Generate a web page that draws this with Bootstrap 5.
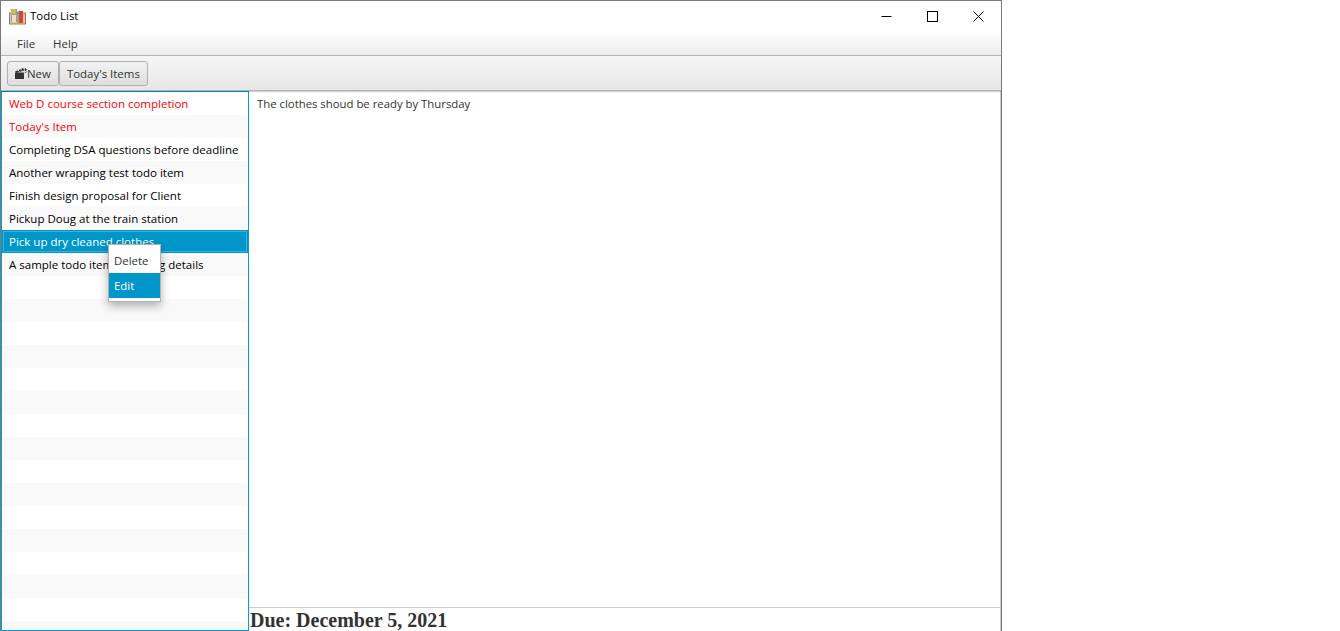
<!DOCTYPE html>
<html lang="en">
<head>
<meta charset="utf-8">
<title>Todo List</title>
<link href="https://cdn.jsdelivr.net/npm/bootstrap@5.3.0/dist/css/bootstrap.min.css" rel="stylesheet">
<style>
html,body{height:631px;overflow:hidden;background:#fff}
body{font-family:"Open Sans","Noto Sans",sans-serif;font-size:11.45px;color:#333;line-height:16px}
.appwin{width:1002px;height:631px;border:1px solid #7a7a7a;border-bottom:0}
.titlebar{height:30px;flex:none;color:#000}
.titlebar .ttl{margin-left:4px}
.tlogo{margin-left:8px}
.winbtn{width:46px;height:30px}
.menubar{height:25px;flex:none;background:linear-gradient(#fff,#ececec);border-bottom:1px solid #b5b5b5;padding-left:7px}
.menuitem{padding:2px 9px 0;color:#333;line-height:24px}
.toolbar{height:35px;flex:none;background:linear-gradient(#f6f6f6,#e6e6e6);border-bottom:1px solid #b4b4b4;box-shadow:0 1px 1px rgba(0,0,0,.18);padding:5px 0 0 6px;z-index:2}
.fxbtn{height:25px;padding:0 7px;font-size:11.45px;line-height:23px;color:#333;background:linear-gradient(#f2f2f2,#dedede);border:1px solid #b0b0b0;border-radius:3px}
.mainarea{min-height:0}
.todolist{width:248px;flex:none;border:1px solid #039ed3;overflow:hidden}
.todorow{height:23px;flex:none;font-size:11.5px;line-height:24px;padding-left:7px;color:#000;white-space:nowrap}
.todorow:nth-child(even){background:#f9f9f9}
.todorow.late{color:#f00}
.todorow.picked{background:#0096c9;color:#fff;outline:1px solid #3cb0d8;outline-offset:-2px}
.ctxmenu{position:absolute;left:107px;top:153px;width:53px;height:58px;background:#fff;border:1px solid #b2b2b2;box-shadow:0 4px 9px rgba(0,0,0,.3);padding-top:3px}
.ctxitem{height:25px;line-height:25px;padding-left:5px;color:#333}
.ctxitem.on{background:#0096c9;color:#fff}
.detailpane{min-width:0;border-right:1px solid #ccc}
.detailtext{padding:5px 8px;line-height:16px;color:#333;font-size:11.35px}
.duebar{height:24px;flex:none;border-top:1px solid #ccc;padding-left:1px;font:bold 20px/24px "Liberation Serif",serif;color:#333;white-space:nowrap}
</style>
</head>
<body>
<div class="appwin d-flex flex-column">
  <div class="titlebar d-flex align-items-center">
    <svg class="tlogo" width="17" height="17" viewBox="0 0 17 17"><rect x="0.5" y="5" width="16" height="11" fill="#e9c79a" stroke="#9a7a55"/><rect x="2" y="1" width="6" height="13" fill="#6fb0c8"/><circle cx="4.500" cy="3.500" r="2.500" fill="#e0b93c"/><rect x="3" y="7" width="4" height="7" fill="#f3dfc2"/><rect x="10" y="3" width="4" height="12" fill="#d9453a"/><rect x="8.500" y="3" width="1" height="12" fill="#8a6a48"/></svg>
    <span class="ttl">Todo List</span>
    <div class="ms-auto d-flex">
      <div class="winbtn d-flex align-items-center justify-content-center"><svg width="11" height="11" viewBox="0 0 11 11"><path d="M0.500 5.500H10.500" stroke="#000" fill="none"/></svg></div>
      <div class="winbtn d-flex align-items-center justify-content-center"><svg width="11" height="11" viewBox="0 0 11 11"><rect x="0.500" y="0.500" width="10" height="10" stroke="#000" fill="none"/></svg></div>
      <div class="winbtn d-flex align-items-center justify-content-center"><svg width="11" height="11" viewBox="0 0 11 11"><path d="M0.500 0.500L10.500 10.500M10.500 0.500L0.500 10.500" stroke="#000" fill="none"/></svg></div>
    </div>
  </div>
  <div class="menubar d-flex align-items-center">
    <span class="menuitem">File</span>
    <span class="menuitem">Help</span>
  </div>
  <div class="toolbar d-flex align-items-start position-relative">
    <button type="button" class="fxbtn d-flex align-items-center">
      <svg width="12" height="11" viewBox="0 0 12 11"><path d="M0 4.500H9V11H0Z" fill="#333"/><path d="M0 3.500L8 0L9.500 2.500L1 5Z" fill="#333"/><path d="M10 0L12 1.500L10.500 3.500L9.500 1.500Z" fill="#333"/><path d="M3 2L4.500 3.600M5.500 1L7 2.500" stroke="#eee" fill="none"/><path d="M9.500 5L12 3.500" stroke="#777" fill="none"/></svg><span>New</span>
    </button>
    <button type="button" class="fxbtn">Today's Items</button>
  </div>
  <div class="mainarea d-flex flex-grow-1 position-relative">
    <div class="todolist d-flex flex-column">
      <div class="todorow late">Web D course section completion</div>
      <div class="todorow late">Today's Item</div>
      <div class="todorow">Completing DSA questions before deadline</div>
      <div class="todorow">Another wrapping test todo item</div>
      <div class="todorow">Finish design proposal for Client</div>
      <div class="todorow">Pickup Doug at the train station</div>
      <div class="todorow picked">Pick up dry cleaned clothes</div>
      <div class="todorow">A sample todo item with long details</div>
      <div class="todorow"></div><div class="todorow"></div><div class="todorow"></div><div class="todorow"></div>
      <div class="todorow"></div><div class="todorow"></div><div class="todorow"></div><div class="todorow"></div>
      <div class="todorow"></div><div class="todorow"></div><div class="todorow"></div><div class="todorow"></div>
      <div class="todorow"></div><div class="todorow"></div><div class="todorow"></div><div class="todorow"></div>
    </div>
    <div class="ctxmenu">
      <div class="ctxitem">Delete</div>
      <div class="ctxitem on">Edit</div>
    </div>
    <div class="detailpane d-flex flex-column flex-grow-1">
      <div class="detailtext flex-grow-1">The clothes shoud be ready by Thursday</div>
      <div class="duebar">Due: December 5, 2021</div>
    </div>
  </div>
</div>
<script src="https://cdn.jsdelivr.net/npm/bootstrap@5.3.0/dist/js/bootstrap.bundle.min.js"></script>
</body>
</html>
